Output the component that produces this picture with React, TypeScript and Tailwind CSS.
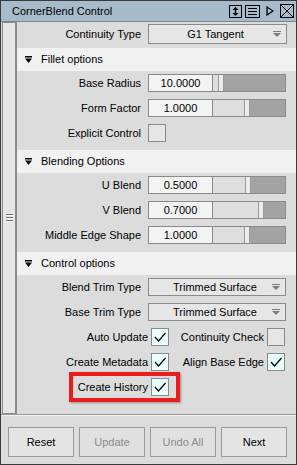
import React from 'react';

const Arrow = ({ color = '#7c7c7c' }: { color?: string }) => (
  <svg width="8" height="6" viewBox="0 0 8 6">
    <rect x="0" y="0" width="8" height="1" fill={color} />
    <polygon points="0,2 8,2 4,6" fill={color} />
  </svg>
);

const Check = () => (
  <svg width="16" height="16" viewBox="0 0 16 16">
    <polyline points="3,8 6.5,12 13.5,4" fill="none" stroke="#000" strokeWidth="1.2" />
  </svg>
);

function Box({ checked }: { checked?: boolean }) {
  return (
    <div
      className={
        'w-[18px] h-[18px] border border-[#8a8a8a] flex items-center justify-center ' +
        (checked ? 'bg-[#eafdfd]' : 'bg-[#e6e6e6]')
      }
    >
      {checked && <Check />}
    </div>
  );
}

function Dropdown({ value, tall }: { value: string; tall?: boolean }) {
  return (
    <div
      className={
        'relative border border-[#8a8a8a] bg-[#e6e6e6] flex items-center justify-center ' +
        (tall ? 'h-[20px]' : 'h-[18px]')
      }
    >
      <span className="pr-[4px]">{value}</span>
      <div className="absolute right-[5px] top-1/2 -translate-y-1/2 flex">
        <Arrow />
      </div>
    </div>
  );
}

function SliderField({ value, handle }: { value: string; handle: number }) {
  return (
    <div className="h-[18px] border border-[#8a8a8a] flex">
      <div className="w-[64px] border-r border-[#8a8a8a] bg-[#f3f3f3] flex items-center justify-center">
        {value}
      </div>
      <div className="flex-1 flex">
        <div className="bg-[#dedede]" style={{ width: handle }} />
        <div className="w-[6px] bg-[#ececec] border-x border-[#9a9a9a]" />
        <div className="flex-1 bg-[#a3a3a3]" />
      </div>
    </div>
  );
}

function Row({ label, children }: { label: string; children: React.ReactNode }) {
  return (
    <div className="grid grid-cols-[124px_1fr] gap-x-[7px] pr-[10px] h-[18px] items-center">
      <span className="text-right leading-none">{label}</span>
      {children}
    </div>
  );
}

function Header({ title }: { title: string }) {
  return (
    <div className="h-[23px] bg-[#f1f1f1] flex items-center pl-[8px]">
      <svg width="7" height="7" viewBox="0 0 7 7">
        <rect x="0" y="0" width="7" height="1.5" fill="#000" />
        <polygon points="0,2.5 7,2.5 3.5,7" fill="#000" />
      </svg>
      <span className="ml-[9px]">{title}</span>
    </div>
  );
}

function CheckPair({ label, checked }: { label: string; checked?: boolean }) {
  return (
    <div className="flex items-center">
      <span className="leading-none">{label}</span>
      <div className="ml-[3px]">
        <Box checked={checked} />
      </div>
    </div>
  );
}

export default function App() {
  return (
    <div className="w-[297px] h-[465px] border border-[#3a3a3a] bg-[#dcdcdc] flex flex-col text-[11px] text-black font-['Liberation_Sans',Arial,sans-serif]">
      {/* title bar */}
      <div className="h-[20px] bg-[#a8bbca] flex items-center pl-[11px] pr-[2px]">
        <span className="flex-1 text-[11px]">CornerBlend Control</span>
        <div className="flex items-center">
          <svg width="13" height="13" viewBox="0 0 13 13">
            <rect x="0.5" y="0.5" width="12" height="12" fill="none" stroke="#000" />
            <line x1="6.5" y1="4" x2="6.5" y2="9" stroke="#000" strokeWidth="1.5" />
            <polygon points="3.5,5 9.5,5 6.5,2" fill="#000" />
            <polygon points="3.5,8 9.5,8 6.5,11" fill="#000" />
          </svg>
          <svg width="15" height="13" viewBox="0 0 15 13" className="ml-[3px]">
            <rect x="0.5" y="0.5" width="14" height="12" fill="none" stroke="#000" />
            <line x1="3" y1="3.5" x2="12" y2="3.5" stroke="#000" />
            <line x1="3" y1="6.5" x2="12" y2="6.5" stroke="#000" />
            <line x1="3" y1="9.5" x2="12" y2="9.5" stroke="#000" />
          </svg>
          <svg width="8" height="10" viewBox="0 0 8 10" className="ml-[6px]">
            <polygon points="1,1 7,5 1,9" fill="none" stroke="#000" strokeWidth="1.3" />
          </svg>
          <svg width="14" height="14" viewBox="0 0 14 14" className="ml-[6px]">
            <rect x="0.5" y="0.5" width="13" height="13" fill="none" stroke="#000" />
            <line x1="1" y1="1" x2="13" y2="13" stroke="#000" />
            <line x1="13" y1="1" x2="1" y2="13" stroke="#000" />
          </svg>
        </div>
      </div>
      <div className="h-px bg-[#7d8690]" />

      {/* main */}
      <div className="flex-1 flex min-h-0">
        <div className="w-[16px] pl-[1px] flex">
          <div className="w-[15px] border border-[#8a8a8a] border-r-2 bg-[#e6e6e6] flex flex-col items-center justify-center gap-[1px]">
            <div className="w-[7px] h-[2px] border-t border-[#707070] border-b border-b-[#fafafa]" />
            <div className="w-[7px] h-[2px] border-t border-[#707070] border-b border-b-[#fafafa]" />
            <div className="w-[7px] h-[2px] border-t border-[#707070] border-b border-b-[#fafafa]" />
          </div>
        </div>

        <div className="flex-1 flex flex-col">
          <div className="pt-[2px] pb-[4px] pr-[0px]">
            <div className="grid grid-cols-[124px_1fr] gap-x-[7px] pr-[9px] h-[20px] items-center">
              <span className="text-right leading-none">Continuity Type</span>
              <Dropdown value="G1 Tangent" tall />
            </div>
          </div>

          <Header title="Fillet options" />
          <div className="pt-[3px] pb-[8px] flex flex-col gap-[7px]">
            <Row label="Base Radius">
              <SliderField value="10.0000" handle={5} />
            </Row>
            <Row label="Form Factor">
              <SliderField value="1.0000" handle={31} />
            </Row>
            <Row label="Explicit Control">
              <Box />
            </Row>
          </div>

          <Header title="Blending Options" />
          <div className="pt-[3px] pb-[8px] flex flex-col gap-[7px]">
            <Row label="U Blend">
              <SliderField value="0.5000" handle={32} />
            </Row>
            <Row label="V Blend">
              <SliderField value="0.7000" handle={45} />
            </Row>
            <Row label="Middle Edge Shape">
              <SliderField value="1.0000" handle={31} />
            </Row>
          </div>

          <Header title="Control options" />
          <div className="pt-[3px] flex flex-col gap-[7px]">
            <Row label="Blend Trim Type">
              <Dropdown value="Trimmed Surface" />
            </Row>
            <Row label="Base Trim Type">
              <Dropdown value="Trimmed Surface" />
            </Row>
            <div className="flex h-[18px] items-center">
              <div className="w-[152px] flex justify-end">
                <CheckPair label="Auto Update" checked />
              </div>
              <div className="w-[116px] flex justify-end">
                <CheckPair label="Continuity Check" />
              </div>
            </div>
            <div className="flex h-[18px] items-center">
              <div className="w-[152px] flex justify-end">
                <CheckPair label="Create Metadata" checked />
              </div>
              <div className="w-[116px] flex justify-end">
                <CheckPair label="Align Base Edge" checked />
              </div>
            </div>
            <div className="flex h-[18px] items-center">
              <div className="relative w-[152px] flex justify-end">
                <CheckPair label="Create History" checked />
                <div className="absolute left-[52px] top-[-6px] w-[111px] h-[30px] border-4 border-[#ec1c1c] shadow-[1px_1px_2px_rgba(0,0,0,0.35)]" />
              </div>
            </div>
          </div>
        </div>
      </div>

      {/* separator */}
      <div className="h-[2px] border-t border-[#9a9a9a] border-b border-b-[#f2f2f2]" />

      {/* buttons */}
      <div className="h-[48px] pt-[11px] pl-[7px] flex gap-[5px]">
        <button className="w-[66px] h-[30px] border border-[#999] bg-[#e4e4e4]">Reset</button>
        <button className="w-[66px] h-[30px] border border-[#999] bg-[#e0e0e0] text-[#8c8c8c]">Update</button>
        <button className="w-[66px] h-[30px] border border-[#999] bg-[#e0e0e0] text-[#8c8c8c]">Undo All</button>
        <button className="w-[66px] h-[30px] border border-[#999] bg-[#e4e4e4]">Next</button>
      </div>
    </div>
  );
}
